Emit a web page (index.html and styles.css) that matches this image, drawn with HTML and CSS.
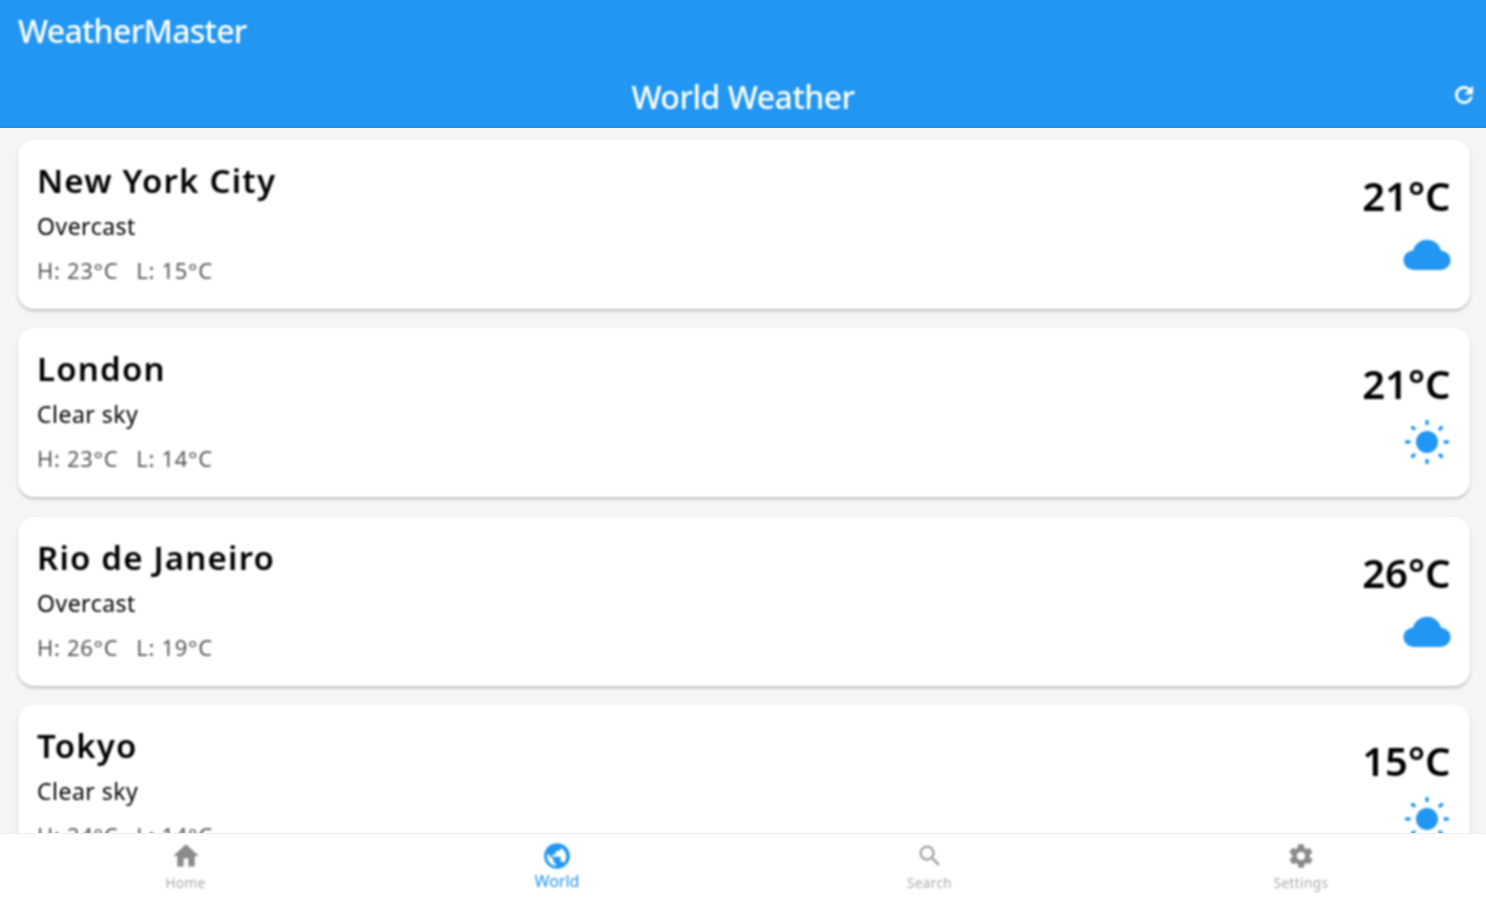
FILE: index.html
```html
<!DOCTYPE html>
<html lang="en">
<head>
<meta charset="utf-8">
<title>WeatherMaster</title>
<link rel="stylesheet" href="styles.css">
</head>
<body>
<svg class="defs" width="0" height="0" aria-hidden="true">
  <symbol id="cloud" viewBox="0 0 48 32"><path d="M12 31C5.500 31 .5 26.800.5 21.200.5 16 4.600 12.200 9.700 11.800 12 5.200 17.500.8 24 .8c7 0 12.500 4.600 14 11 5.400.4 9.500 4.200 9.500 9.400 0 5.600-4.800 9.800-11 9.800z"/></symbol>
  <symbol id="sun" viewBox="0 0 46 46"><circle cx="23" cy="23" r="11"/><g class="rays"><path d="M23 2.500v2M23 41.500v2M2.500 23h2.500M41 23h2.500M8.500 8.500l1.500 1.200M36 36l1.500 1.500M8.500 37.500l1.500-1.500M36 10l1.500-1.500"/></g></symbol>
</svg>
<div class="app">
  <header class="appbar">
    <div class="brand">WeatherMaster</div>
    <div class="titlerow">
      <h1 class="title">World Weather</h1>
      <svg class="refresh" viewBox="0 0 24 24"><path d="M17.650 6.350A7.960 7.960 0 0 0 12 4a8 8 0 1 0 7.730 10h-2.080A6 6 0 1 1 12 6c1.660 0 3.140.69 4.220 1.780L13 11h7V4z"/></svg>
    </div>
  </header>
  <main class="list">
    <article class="card">
      <div class="info">
        <h2 class="city">New York City</h2>
        <p class="cond">Overcast</p>
        <p class="range"><span>H: 23°C</span><span>L: 15°C</span></p>
      </div>
      <div class="now">
        <div class="temp">21°C</div>
        <svg class="ico-cloud"><use href="#cloud"/></svg>
      </div>
    </article>
    <article class="card">
      <div class="info">
        <h2 class="city">London</h2>
        <p class="cond">Clear sky</p>
        <p class="range"><span>H: 23°C</span><span>L: 14°C</span></p>
      </div>
      <div class="now">
        <div class="temp">21°C</div>
        <svg class="ico-sun"><use href="#sun"/></svg>
      </div>
    </article>
    <article class="card">
      <div class="info">
        <h2 class="city">Rio de Janeiro</h2>
        <p class="cond">Overcast</p>
        <p class="range"><span>H: 26°C</span><span>L: 19°C</span></p>
      </div>
      <div class="now">
        <div class="temp">26°C</div>
        <svg class="ico-cloud"><use href="#cloud"/></svg>
      </div>
    </article>
    <article class="card">
      <div class="info">
        <h2 class="city">Tokyo</h2>
        <p class="cond">Clear sky</p>
        <p class="range"><span>H: 24°C</span><span>L: 14°C</span></p>
      </div>
      <div class="now">
        <div class="temp">15°C</div>
        <svg class="ico-sun"><use href="#sun"/></svg>
      </div>
    </article>
  </main>
  <nav class="tabs">
    <a class="tab">
      <svg viewBox="0 0 24 24"><path d="M10 21v-7h4v7h5.500v-9H23L12 2 1 12h3.500v9z"/></svg>
      <span>Home</span>
    </a>
    <a class="tab active">
      <svg viewBox="0 0 24 24"><path fill-rule="evenodd" d="M12 1a11 11 0 1 0 0 22 11 11 0 0 0 0-22zM3.500 12c0-.8.1-1.500.3-2.200L9 15v1.200c0 1.100.9 2 2 2v2.300A8.500 8.500 0 0 1 3.500 12zm14.400 6.100c-.3-.8-1-1.400-1.900-1.400h-1v-3c0-.6-.4-1-1-1H8v-2h2c.6 0 1-.4 1-1v-2h2c1.100 0 2-.9 2-2v-.7a8.500 8.500 0 0 1 2.900 13.100z"/></svg>
      <span>World</span>
    </a>
    <a class="tab">
      <svg class="light" viewBox="0 0 24 24"><path d="M15.500 14h-.79l-.28-.27A6.471 6.471 0 0 0 16 9.500 6.500 6.500 0 1 0 9.500 16c1.610 0 3.090-.59 4.230-1.570l.27.28v.79l5 4.990L20.490 19l-4.990-5zm-6 0C7.010 14 5 11.990 5 9.500S7.010 5 9.500 5 14 7.010 14 9.500 11.990 14 9.500 14z"/></svg>
      <span>Search</span>
    </a>
    <a class="tab">
      <svg viewBox="0 0 24 24"><path fill-rule="evenodd" d="M19.400 13c.1-.3.100-.7.100-1s0-.7-.1-1l2.100-1.600c.2-.2.200-.4.100-.6l-2-3.500c-.1-.2-.4-.3-.6-.2l-2.500 1c-.5-.4-1.100-.7-1.700-1l-.4-2.600c0-.3-.2-.5-.5-.5h-4c-.3 0-.5.200-.5.500l-.4 2.600c-.6.300-1.200.6-1.700 1l-2.500-1c-.2-.1-.5 0-.6.200l-2 3.500c-.1.200-.1.400.1.600L4.600 11c-.1.300-.1.700-.1 1s0 .7.100 1l-2.100 1.600c-.2.200-.2.400-.1.600l2 3.500c.1.200.4.300.6.200l2.500-1c.5.400 1.100.7 1.700 1l.4 2.600c0 .3.200.5.500.5h4c.3 0 .5-.2.500-.5l.4-2.600c.6-.3 1.200-.6 1.700-1l2.500 1c.2.100.5 0 .6-.2l2-3.500c.1-.2.100-.4-.1-.6zM12 15.500a3.500 3.500 0 1 1 0-7 3.500 3.500 0 0 1 0 7z"/></svg>
      <span>Settings</span>
    </a>
  </nav>
</div>
</body>
</html>
```
FILE: styles.css
```css
* { box-sizing: border-box; }
html, body { margin: 0; height: 100%; }
body {
  font-family: "Noto Sans", "Open Sans", sans-serif;
  background: #f5f5f5;
  color: #000;
  overflow: hidden;
}
.defs { display: block; height: 0; }
.app {
  height: 900px;
  display: flex;
  flex-direction: column;
}
.brand, .titlerow, .card, .tab { filter: blur(.8px); }

.appbar {
  flex: none;
  height: 128px;
  background: #2196f3;
  color: #fff;
  border-bottom: 1px solid #1e8ff0;
}
.brand {
  height: 64px;
  padding: 12px 0 0 18px;
  font-size: 32px;
  line-height: 38px;
  letter-spacing: -.7px;
  font-weight: 500;
}
.titlerow {
  position: relative;
  height: 63px;
  display: flex;
  justify-content: center;
  padding-top: 14px;
}
.title {
  margin: 0;
  font-size: 32px;
  line-height: 38px;
  font-weight: 500;
  letter-spacing: -.5px;
}
.refresh {
  position: absolute;
  right: 9px;
  top: 18px;
  width: 26px;
  height: 26px;
  fill: #fff;
  stroke: #fff;
  stroke-width: .8;
}

.list {
  flex: 1;
  min-height: 0;
  overflow: hidden;
  padding: 11.500px 16.500px 0 18px;
  display: flex;
  flex-direction: column;
  gap: 19.670px;
}
.card {
  flex: none;
  height: 169px;
  background: #fff;
  border-radius: 16px;
  box-shadow: 0 2px 3px rgba(0, 0, 0, .24);
  padding: 19px 19px 0;
  display: flex;
  justify-content: space-between;
}
.city {
  margin: 0;
  font-size: 33px;
  line-height: 44px;
  font-weight: 600;
  letter-spacing: 1.200px;
  color: #000;
}
.cond {
  margin: 9px 0 0;
  font-size: 23px;
  line-height: 28px;
  letter-spacing: .5px;
  color: #000;
}
.range {
  margin: 16px 0 0;
  font-size: 22px;
  line-height: 28px;
  letter-spacing: .7px;
  color: #555;
  display: flex;
  gap: 18px;
}
.now {
  display: flex;
  flex-direction: column;
  align-items: flex-end;
}
.temp {
  margin-top: 14px;
  font-size: 40px;
  line-height: 46px;
  font-weight: 600;
  color: #000;
}
.ico-cloud {
  width: 48px;
  height: 32px;
  margin-top: 20px;
  fill: #2196f3;
}
.ico-sun {
  width: 46px;
  height: 46px;
  margin-top: 12px;
  margin-right: 1px;
  fill: #2196f3;
}
.rays { fill: none; stroke: #2196f3; stroke-width: 3.500; stroke-linecap: round; }

.tabs {
  position: relative;
  flex: none;
  height: 67px;
  background: #fff;
  border-top: 1px solid #eee;
  display: grid;
  grid-template-columns: 371px 372px 373px 370px;
}
.tab {
  display: flex;
  flex-direction: column;
  align-items: center;
  padding-top: 8px;
  color: #a8a8a8;
  font-size: 13.500px;
  line-height: 16px;
  letter-spacing: .4px;
}
.tab svg { width: 28px; height: 28px; fill: #8a8a8a; margin-bottom: 5px; }
.tab svg.light { fill: #a0a0a0; }
.tab.active { color: #2196f3; font-size: 16px; line-height: 18px; letter-spacing: 0; }
.tab.active svg { fill: #2196f3; margin-bottom: 2px; }
```
